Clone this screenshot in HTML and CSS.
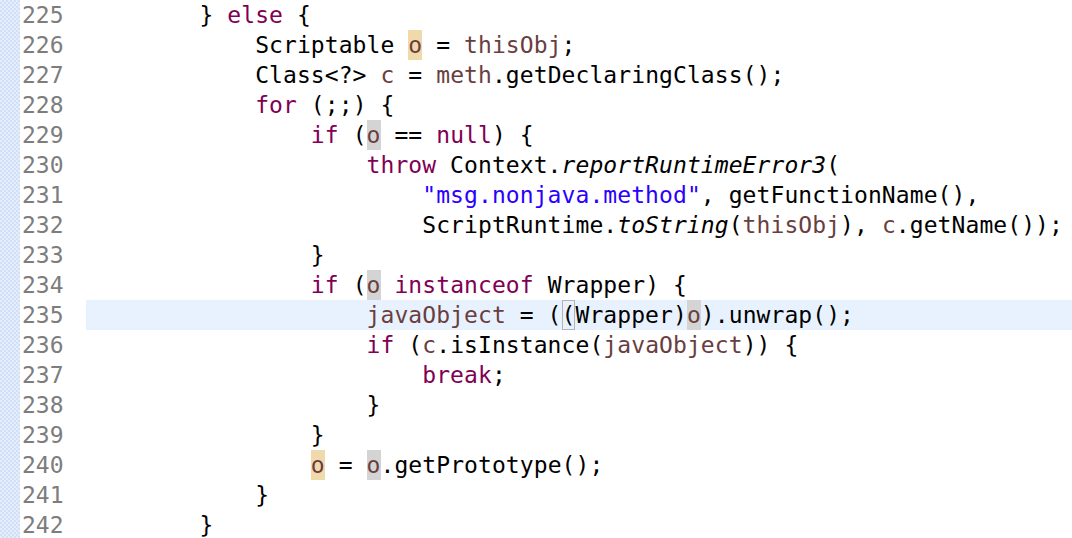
FILE: index.html
```html
<!DOCTYPE html>
<html>
<head>
<meta charset="utf-8">
<link rel="stylesheet" href="styles.css">
</head>
<body>
<div class="editor">
  <div class="ruler"></div>
  <div class="lines">
    <div class="row"><span class="num">225</span><span class="code">        } <span class="k">else</span> {</span></div>
    <div class="row"><span class="num">226</span><span class="code">            Scriptable <span class="v w">o</span> = <span class="v">thisObj</span>;</span></div>
    <div class="row"><span class="num">227</span><span class="code">            Class&lt;?&gt; <span class="v">c</span> = <span class="v">meth</span>.getDeclaringClass();</span></div>
    <div class="row"><span class="num">228</span><span class="code">            <span class="k">for</span> (;;) {</span></div>
    <div class="row"><span class="num">229</span><span class="code">                <span class="k">if</span> (<span class="v r">o</span> == <span class="k">null</span>) {</span></div>
    <div class="row"><span class="num">230</span><span class="code">                    <span class="k">throw</span> Context.<span class="i">reportRuntimeError3</span>(</span></div>
    <div class="row"><span class="num">231</span><span class="code">                        <span class="s">"msg.nonjava.method"</span>, getFunctionName(),</span></div>
    <div class="row"><span class="num">232</span><span class="code">                        ScriptRuntime.<span class="i">toString</span>(<span class="v">thisObj</span>), <span class="v">c</span>.getName());</span></div>
    <div class="row"><span class="num">233</span><span class="code">                }</span></div>
    <div class="row"><span class="num">234</span><span class="code">                <span class="k">if</span> (<span class="v r">o</span> <span class="k">instanceof</span> Wrapper) {</span></div>
    <div class="row current"><span class="num">235</span><span class="code">                    <span class="v">javaObject</span> = (<span class="b">(</span>Wrapper)<span class="v r">o</span>).unwrap();</span></div>
    <div class="row"><span class="num">236</span><span class="code">                    <span class="k">if</span> (<span class="v">c</span>.isInstance(<span class="v">javaObject</span>)) {</span></div>
    <div class="row"><span class="num">237</span><span class="code">                        <span class="k">break</span>;</span></div>
    <div class="row"><span class="num">238</span><span class="code">                    }</span></div>
    <div class="row"><span class="num">239</span><span class="code">                }</span></div>
    <div class="row"><span class="num">240</span><span class="code">                <span class="v w">o</span> = <span class="v r">o</span>.getPrototype();</span></div>
    <div class="row"><span class="num">241</span><span class="code">            }</span></div>
    <div class="row"><span class="num">242</span><span class="code">        }</span></div>
  </div>
</div>
</body>
</html>
```
FILE: styles.css
```css
html, body {
  margin: 0;
  padding: 0;
  background: #ffffff;
  overflow: hidden;
}
.editor {
  display: flex;
  width: 1072px;
  height: 538px;
  font-family: "DejaVu Sans Mono", "Liberation Mono", monospace;
  font-size: 23px;
  line-height: 30px;
}
.ruler {
  width: 20px;
  flex: none;
  background-color: #e6eefb;
  background-image: conic-gradient(#cfe0f7 25%, transparent 0 50%, #cfe0f7 0 75%, transparent 0);
  background-size: 4px 4px;
}
.lines {
  flex: 1;
  display: flex;
  flex-direction: column;
}
.row {
  display: flex;
  height: 30px;
}
.num {
  width: 64px;
  flex: none;
  padding-left: 2px;
  color: #7d7d7d;
}
.code {
  flex: 1;
  padding-left: 2px;
  white-space: pre;
  letter-spacing: 0.08px;
  color: #000000;
}
.current .code {
  background: #e8f2fe;
}
.k { color: #7f0055; }
.v { color: #6a3e3e; }
.s { color: #2a00ff; }
.i { font-style: italic; }
.w, .r, .b {
  display: inline-block;
  height: 30px;
  line-height: 30px;
}
.w { background: #f0d9ab; }
.r { background: #d4d4d4; }
.b {
  box-shadow: inset 0 0 0 1px #b4b4b4;
}
```
